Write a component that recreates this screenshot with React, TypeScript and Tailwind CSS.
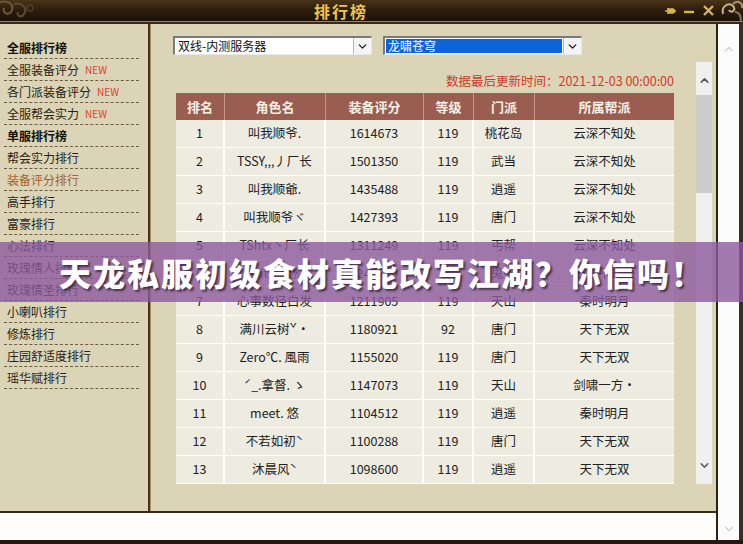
import { ChevronDown, ChevronUp } from "lucide-react";

const menu = [
  { t: "全服排行榜", bold: true },
  { t: "全服装备评分", isNew: true },
  { t: "各门派装备评分", isNew: true },
  { t: "全服帮会实力", isNew: true },
  { t: "单服排行榜", bold: true },
  { t: "帮会实力排行" },
  { t: "装备评分排行", active: true },
  { t: "高手排行" },
  { t: "富豪排行" },
  { t: "心法排行" },
  { t: "玫瑰情人排行" },
  { t: "玫瑰情圣排行" },
  { t: "小喇叭排行" },
  { t: "修炼排行" },
  { t: "庄园舒适度排行" },
  { t: "瑶华赋排行" },
];

const head = ["排名", "角色名", "装备评分", "等级", "门派", "所属帮派"];

const rows = [
  ["1", "叫我顺爷.", "1614673", "119", "桃花岛", "云深不知处"],
  ["2", "TSSY,,,丿厂长", "1501350", "119", "武当", "云深不知处"],
  ["3", "叫我顺爺.", "1435488", "119", "逍遥", "云深不知处"],
  ["4", "叫我顺爷ヾ", "1427393", "119", "唐门", "云深不知处"],
  ["5", "TShtx丶厂长", "1311249", "119", "丐帮", "云深不知处"],
  ["6", "魅dt丶淡然", "1245326", "119", "鬼谷", "云深不知处"],
  ["7", "心事数径白发", "1211905", "119", "天山", "秦时明月"],
  ["8", "满川云树ˇ•", "1180921", "92", "唐门", "天下无双"],
  ["9", "Zero℃. 風雨", "1155020", "119", "唐门", "天下无双"],
  ["10", "ˊ_.拿督. ゝ", "1147073", "119", "天山", "剑啸一方·"],
  ["11", "meet. 悠", "1104512", "119", "逍遥", "秦时明月"],
  ["12", "不若如初ˋ", "1100288", "119", "唐门", "天下无双"],
  ["13", "沐晨风ˋ", "1098600", "119", "逍遥", "天下无双"],
];

function FakeSelect({ text, highlight }: { text: string; highlight?: boolean }) {
  return (
    <div className="flex h-[19px] w-[199px] border-t-2 border-l-2 border-[#7a7a7a] border-r border-b border-r-[#e8e8e8] border-b-[#e8e8e8] bg-white">
      <div className="flex flex-1 items-center p-[1px]">
        <div
          className={`flex h-full w-full items-center pl-[2px] text-[12px] leading-none ${
            highlight ? "bg-[#0c64d6] text-white" : "text-[#111]"
          }`}
        >
          {text}
        </div>
      </div>
      <div className="flex w-[18px] items-center justify-center border-l border-[#b8b8b8] bg-[#f4f4f4]">
        <ChevronDown size={13} strokeWidth={2.6} className="text-[#222]" />
      </div>
    </div>
  );
}

export default function App() {
  return (
    <div className="relative flex h-[544px] w-[743px] flex-col overflow-hidden bg-[#1f160c] font-['Noto_Sans_CJK_SC',sans-serif]">
      {/* Title bar */}
      <div className="relative flex h-[21px] items-center bg-gradient-to-b from-[#4a3419] via-[#2c1c0c] to-[#1c1208]">
        <svg width="36" height="22" viewBox="0 0 36 22" className="absolute left-0 top-0">
          <path d="M0 2 C8 0 14 4 12 10 C10 16 2 14 4 8" fill="none" stroke="#6e5a3a" strokeWidth="2" />
          <path d="M14 4 C22 2 28 8 24 14 C22 18 16 16 18 12" fill="none" stroke="#5c4a30" strokeWidth="2" />
          <circle cx="30" cy="8" r="3" fill="none" stroke="#4c3c26" strokeWidth="1.5" />
        </svg>
        <div className="w-[314px]" />
        <span className="text-[16px] font-bold leading-none tracking-[2px] text-[#eec448]">排行榜</span>
        <div className="flex-1" />
        <div className="mr-[28px] flex items-center gap-[7px] text-[#d8b452]">
          <svg width="12" height="12" viewBox="0 0 12 12">
            <path d="M1 6 H4 M4 3 V9 M4 4 H9 L11 6 L9 8 H4" fill="#d8b452" stroke="#d8b452" strokeWidth="1.6" />
          </svg>
          <svg width="12" height="12" viewBox="0 0 12 12">
            <path d="M1 7 H11" stroke="#d8b452" strokeWidth="2.4" />
          </svg>
          <svg width="13" height="13" viewBox="0 0 13 13">
            <path d="M2 2 L11 11 M11 2 L2 11" stroke="#d8b452" strokeWidth="2.4" />
          </svg>
        </div>
        <svg width="24" height="24" viewBox="0 0 24 24" className="absolute right-0 top-0">
          <path d="M4 14 C2 6 10 2 14 6 C18 10 12 14 10 10" fill="none" stroke="#c8b488" strokeWidth="2" />
          <path d="M14 4 C18 0 24 2 23 8" fill="none" stroke="#a89468" strokeWidth="2" />
          <path d="M16 12 C20 12 22 16 22 22" fill="none" stroke="#8a7650" strokeWidth="2" />
        </svg>
      </div>
      <div className="h-[1px] bg-[#a58452]" />
      <div className="h-[2px] bg-[#3a2812]" />

      {/* Main */}
      <div className="flex flex-1">
        <div className="flex w-[716px] flex-col">
          <div className="flex h-[487px] bg-[#dbd4b6]">
            {/* Left menu */}
            <div className="w-[148px] pl-[4px] pr-[9px] pt-[13px]">
              {menu.map((m) => (
                <div
                  key={m.t}
                  className="flex h-[22px] items-center border-b border-dashed border-[#6c5c42] pl-[3px] text-[12px] leading-none"
                >
                  <span
                    className={
                      m.bold ? "font-bold text-[#151008]" : m.active ? "text-[#a5602c]" : "text-[#2a2214]"
                    }
                  >
                    {m.t}
                  </span>
                  {m.isNew && <span className="ml-[6px] text-[10px] text-[#e0402e]">NEW</span>}
                </div>
              ))}
            </div>
            <div className="w-[2px] bg-[#4a3214]" />
            <div className="w-[1px] bg-[#b0935e]" />

            {/* Right content */}
            <div className="flex flex-1 flex-col pl-[22px] pt-[12px]">
              <div className="flex gap-[11px]">
                <FakeSelect text="双线-内测服务器" />
                <FakeSelect text="龙啸苍穹" highlight />
              </div>
              <div className="mt-[7px] flex">
                <div className="ml-[3px] flex w-[498px] flex-col">
                  <div className="mt-[12px] h-[14px] text-right text-[12.5px] leading-[14px] text-[#d03a2a]">
                    数据最后更新时间：2021-12-03 00:00:00
                  </div>
                  <div className="mt-[5px] grid grid-cols-[49px_101px_98px_50px_61px_139px]">
                    {head.map((h, i) => (
                      <div
                        key={h}
                        className={`flex h-[27px] items-center justify-center bg-[#9a5e51] text-[13px] font-bold text-[#fbefe4] ${
                          i < 5 ? "border-r border-[#c4958a]" : ""
                        }`}
                      >
                        {h}
                      </div>
                    ))}
                    {rows.map((r) =>
                      r.map((c, i) => (
                        <div
                          key={r[0] + "-" + i}
                          className={`flex h-[28px] items-center justify-center border-b border-white bg-[#eeebe0] pb-[1px] text-[12.5px] text-[#222] ${
                            i < 5 ? "border-r-2" : ""
                          }`}
                        >
                          {c}
                        </div>
                      ))
                    )}
                  </div>
                </div>
                <div className="ml-[22px] flex h-[422px] w-[16px] flex-col bg-[#f0f0f0]">
                  <div className="flex h-[33px] items-center justify-center pt-[3px]">
                    <ChevronUp size={13} strokeWidth={3} className="text-[#555]" />
                  </div>
                  <div className="h-[98px] bg-[#cdcdcd]" />
                  <div className="flex-1" />
                  <div className="flex h-[30px] items-center justify-center pb-[8px]">
                    <ChevronDown size={13} strokeWidth={3} className="text-[#666]" />
                  </div>
                </div>
              </div>
            </div>
          </div>
          <div className="h-[2px] bg-[#3a2a14]" />
          <div className="flex-1 bg-[#fdfdfb]" />
        </div>
        <div className="w-[2px] bg-[#2e2010]" />
        <div className="flex flex-1 flex-col items-center justify-between bg-[#fbfbfb] pb-[4px] pt-[18px]">
          <ChevronUp size={14} strokeWidth={2.5} className="text-[#d4d4d4]" />
          <ChevronDown size={14} strokeWidth={2.5} className="text-[#d4d4d4]" />
        </div>
        <div className="w-[4px] bg-[#3a2e22]" />
      </div>
      <div className="h-[4px] bg-[#221a12]" />

      {/* Banner overlay */}
      <div className="absolute left-0 right-0 top-[242px] flex h-[60px] items-center bg-[rgba(140,90,158,0.8)] pl-[59px]">
        <span className="text-[32px] font-black leading-none tracking-[2px] text-white [text-shadow:2px_2px_2px_rgba(40,20,40,0.7)]">
          天龙私服初级食材真能改写江湖？你信吗！
        </span>
      </div>
    </div>
  );
}
